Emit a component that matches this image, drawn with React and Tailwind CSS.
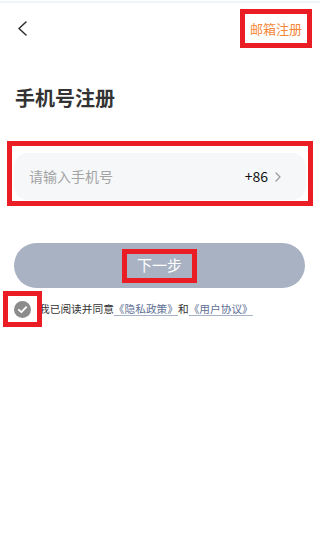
import { useState } from "react";

const font = { fontFamily: '"Noto Sans CJK SC", "Noto Sans", sans-serif' };

function BackIcon() {
  return (
    <svg width="11" height="15" viewBox="0 0 11 15" fill="none" stroke="#333" strokeWidth="1.6" strokeLinecap="round" strokeLinejoin="round">
      <path d="M9 1 L2 7.5 L9 14" />
    </svg>
  );
}

function CheckIcon() {
  return (
    <svg width="17" height="17" viewBox="0 0 17 17">
      <circle cx="8.5" cy="8.5" r="8.5" fill="#8c8c8c" />
      <path d="M4.8 8.8 L7.4 11.2 L12.2 6.2" fill="none" stroke="#fff" strokeWidth="1.8" strokeLinecap="round" strokeLinejoin="round" />
    </svg>
  );
}

export default function App() {
  const [phone, setPhone] = useState("");

  return (
    <div className="relative h-[551px] w-[320px] overflow-hidden bg-white" style={font}>
      <div className="mt-[1px] h-[2px] bg-[#f0f3f8]" />

      <div className="mt-[6px] flex items-center justify-between pl-[17px] pr-[8px]">
        <BackIcon />
        <span className="flex h-[39px] w-[72px] items-center justify-center border-[5px] border-[#ea1c24] text-[13px] text-[#f5873b]">
          邮箱注册
        </span>
      </div>

      <h1 className="mt-[36px] pl-[15px] text-[20px] font-bold leading-[28px] text-[#333]">手机号注册</h1>

      <div className="mx-[7px] mt-[29px] border-[5px] border-[#ea1c24] px-[2px] pt-[7px] pb-[1px]">
        <div className="flex h-[47px] items-center rounded-[14px] bg-[#f6f7f9] pl-[15px] pr-[25px]">
          <input
            value={phone}
            onChange={(event) => setPhone(event.target.value)}
            placeholder="请输入手机号"
            className="min-w-0 flex-1 bg-transparent text-[14px] text-[#333] outline-none placeholder:text-[#a3a3a3]"
          />
          <span className="text-[14px] text-[#111]">+86</span>
          <svg className="ml-[7px]" width="6" height="10" viewBox="0 0 6 10" fill="none" stroke="#9a9a9a" strokeWidth="1.2" strokeLinecap="round" strokeLinejoin="round">
            <path d="M1 1 L5 5 L1 9" />
          </svg>
        </div>
      </div>

      <button className="mx-[14px] mt-[37px] flex h-[45px] w-[291px] items-center justify-center rounded-full bg-[#a9b2c3]">
        <span className="flex h-[34px] w-[75px] items-center justify-center border-[5px] border-[#ea1c24] text-[15px] text-white">
          下一步
        </span>
      </button>

      <div className="mt-[3px] flex items-center">
        <span className="relative z-10 ml-[3px] flex h-[36px] w-[39px] items-center justify-center border-[5px] border-[#ea1c24] bg-white">
          <CheckIcon />
        </span>
        <p className="-ml-[3px] whitespace-nowrap text-[10.7px] text-[#333]">
          我已阅读并同意
          <a className="text-[#5e6f94] underline decoration-[#a7b1c8] underline-offset-2">《隐私政策》</a>
          和
          <a className="text-[#5e6f94] underline decoration-[#a7b1c8] underline-offset-2">《用户协议》</a>
        </p>
      </div>
    </div>
  );
}
